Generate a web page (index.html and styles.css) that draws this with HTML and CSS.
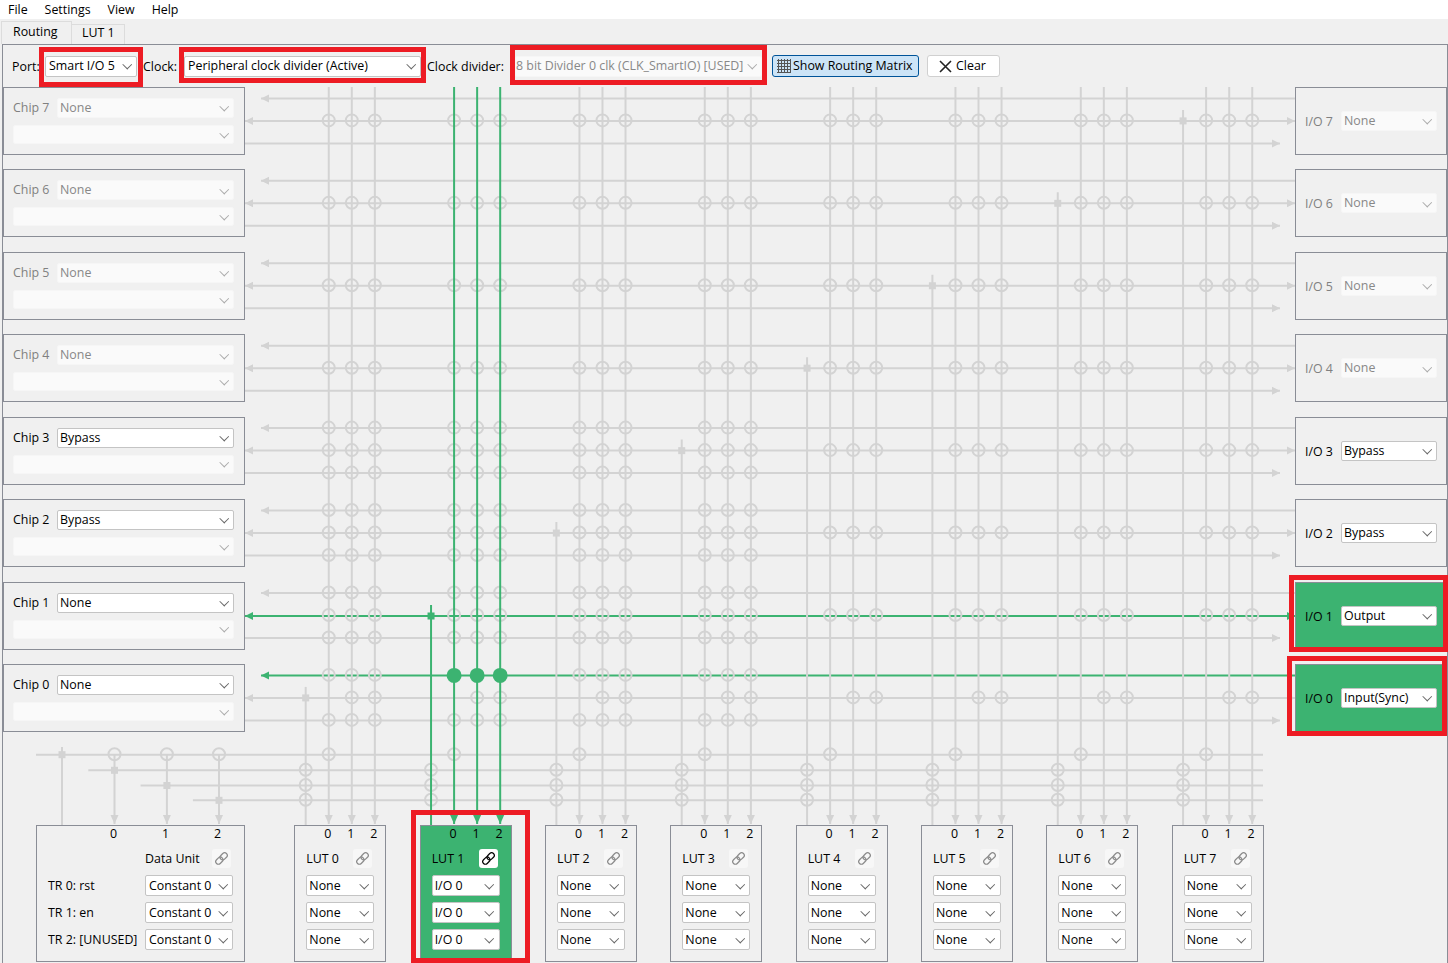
FILE: index.html
```html
<!DOCTYPE html>
<html lang="en">
<head>
    <meta charset="UTF-8">
    <meta name="viewport" content="width=device-width, initial-scale=1.0">
    <title>Smart I/O Configurator</title>
    <link rel="stylesheet" href="styles.css">
</head>
<body>
    <svg class="wires" id="wires" width="1448" height="963" viewBox="0 0 1448 963"></svg>

    <svg class="defs" width="0" height="0">
        <symbol id="link" viewBox="0 0 16 16">
            <g transform="rotate(-45 8 8)" fill="none" stroke="currentColor" stroke-width="1.3">
                <rect x="0.5" y="5.2" width="8.5" height="5.6" rx="2.8"/>
                <rect x="7" y="5.2" width="8.5" height="5.6" rx="2.8"/>
            </g>
        </symbol>
    </svg>

    <nav class="menu">
        <span>File</span>
        <span>Settings</span>
        <span>View</span>
        <span>Help</span>
    </nav>

    <div class="tabs">
        <div class="tab active">Routing</div>
        <div class="tab">LUT 1</div>
    </div>

    <div class="pane">
        <div class="toolbar">
            <label class="lbl-port">Port:</label>
            <div class="combo w-port"><span>Smart I/O 5</span></div>
            <label class="lbl-clock">Clock:</label>
            <div class="combo w-clock"><span>Peripheral clock divider (Active)</span></div>
            <label class="lbl-div">Clock divider:</label>
            <div class="combo off w-div"><span>8 bit Divider 0 clk (CLK_SmartIO) [USED]</span></div>
            <button class="btn btn-matrix">
                <svg width="14" height="14" viewBox="0 0 14 14" fill="none" stroke="#555" stroke-width="1">
                    <path d="M1.5 0V14M4.5 0V14M7.5 0V14M10.5 0V14M13.5 0V14M0 1.5H14M0 4.5H14M0 7.5H14M0 10.5H14M0 13.5H14"/>
                </svg>
                Show Routing Matrix
            </button>
            <button class="btn btn-clear">
                <svg width="13" height="13" viewBox="0 0 13 13" fill="none" stroke="#222" stroke-width="1.6">
                    <path d="M1 1L12 12M12 1L1 12"/>
                </svg>
                Clear
            </button>
        </div>

        <div class="board">
            <div class="column chips">
                <div class="box off">
                    <div class="row"><label>Chip 7</label><div class="combo off"><span>None</span></div></div>
                    <div class="combo off"><span></span></div>
                </div>
                <div class="box off">
                    <div class="row"><label>Chip 6</label><div class="combo off"><span>None</span></div></div>
                    <div class="combo off"><span></span></div>
                </div>
                <div class="box off">
                    <div class="row"><label>Chip 5</label><div class="combo off"><span>None</span></div></div>
                    <div class="combo off"><span></span></div>
                </div>
                <div class="box off">
                    <div class="row"><label>Chip 4</label><div class="combo off"><span>None</span></div></div>
                    <div class="combo off"><span></span></div>
                </div>
                <div class="box">
                    <div class="row"><label>Chip 3</label><div class="combo"><span>Bypass</span></div></div>
                    <div class="combo off"><span></span></div>
                </div>
                <div class="box">
                    <div class="row"><label>Chip 2</label><div class="combo"><span>Bypass</span></div></div>
                    <div class="combo off"><span></span></div>
                </div>
                <div class="box">
                    <div class="row"><label>Chip 1</label><div class="combo"><span>None</span></div></div>
                    <div class="combo off"><span></span></div>
                </div>
                <div class="box">
                    <div class="row"><label>Chip 0</label><div class="combo"><span>None</span></div></div>
                    <div class="combo off"><span></span></div>
                </div>
            </div>

            <div class="column ports">
                <div class="box off"><label>I/O 7</label><div class="combo off"><span>None</span></div></div>
                <div class="box off"><label>I/O 6</label><div class="combo off"><span>None</span></div></div>
                <div class="box off"><label>I/O 5</label><div class="combo off"><span>None</span></div></div>
                <div class="box off"><label>I/O 4</label><div class="combo off"><span>None</span></div></div>
                <div class="box"><label>I/O 3</label><div class="combo"><span>Bypass</span></div></div>
                <div class="box"><label>I/O 2</label><div class="combo"><span>Bypass</span></div></div>
                <div class="box used"><label>I/O 1</label><div class="combo"><span>Output</span></div></div>
                <div class="box used"><label>I/O 0</label><div class="combo"><span>Input(Sync)</span></div></div>
            </div>
        </div>

        <div class="cards">
            <div class="card data-unit">
                <div class="nums"><span>0</span><span>1</span><span>2</span></div>
                <div class="du-grid">
                    <div class="du-title"></div>
                    <div class="title"><label>Data Unit</label><div class="link"><svg width="15" height="15"><use href="#link"/></svg></div></div>
                    <label>TR 0: rst</label><div class="combo"><span>Constant 0</span></div>
                    <label>TR 1: en</label><div class="combo"><span>Constant 0</span></div>
                    <label>TR 2: [UNUSED]</label><div class="combo"><span>Constant 0</span></div>
                </div>
            </div>
            <div class="card lut">
                <div class="nums"><span>0</span><span>1</span><span>2</span></div>
                <div class="title"><label>LUT 0</label><div class="link"><svg width="15" height="15"><use href="#link"/></svg></div></div>
                <div class="combo"><span>None</span></div>
                <div class="combo"><span>None</span></div>
                <div class="combo"><span>None</span></div>
            </div>
            <div class="card lut used">
                <div class="nums"><span>0</span><span>1</span><span>2</span></div>
                <div class="title"><label>LUT 1</label><div class="link on"><svg width="15" height="15"><use href="#link"/></svg></div></div>
                <div class="combo"><span>I/O 0</span></div>
                <div class="combo"><span>I/O 0</span></div>
                <div class="combo"><span>I/O 0</span></div>
            </div>
            <div class="card lut">
                <div class="nums"><span>0</span><span>1</span><span>2</span></div>
                <div class="title"><label>LUT 2</label><div class="link"><svg width="15" height="15"><use href="#link"/></svg></div></div>
                <div class="combo"><span>None</span></div>
                <div class="combo"><span>None</span></div>
                <div class="combo"><span>None</span></div>
            </div>
            <div class="card lut">
                <div class="nums"><span>0</span><span>1</span><span>2</span></div>
                <div class="title"><label>LUT 3</label><div class="link"><svg width="15" height="15"><use href="#link"/></svg></div></div>
                <div class="combo"><span>None</span></div>
                <div class="combo"><span>None</span></div>
                <div class="combo"><span>None</span></div>
            </div>
            <div class="card lut">
                <div class="nums"><span>0</span><span>1</span><span>2</span></div>
                <div class="title"><label>LUT 4</label><div class="link"><svg width="15" height="15"><use href="#link"/></svg></div></div>
                <div class="combo"><span>None</span></div>
                <div class="combo"><span>None</span></div>
                <div class="combo"><span>None</span></div>
            </div>
            <div class="card lut">
                <div class="nums"><span>0</span><span>1</span><span>2</span></div>
                <div class="title"><label>LUT 5</label><div class="link"><svg width="15" height="15"><use href="#link"/></svg></div></div>
                <div class="combo"><span>None</span></div>
                <div class="combo"><span>None</span></div>
                <div class="combo"><span>None</span></div>
            </div>
            <div class="card lut">
                <div class="nums"><span>0</span><span>1</span><span>2</span></div>
                <div class="title"><label>LUT 6</label><div class="link"><svg width="15" height="15"><use href="#link"/></svg></div></div>
                <div class="combo"><span>None</span></div>
                <div class="combo"><span>None</span></div>
                <div class="combo"><span>None</span></div>
            </div>
            <div class="card lut">
                <div class="nums"><span>0</span><span>1</span><span>2</span></div>
                <div class="title"><label>LUT 7</label><div class="link"><svg width="15" height="15"><use href="#link"/></svg></div></div>
                <div class="combo"><span>None</span></div>
                <div class="combo"><span>None</span></div>
                <div class="combo"><span>None</span></div>
            </div>
        </div>
    </div>

    <!-- red annotation frames -->
    <div class="mark mark-port"></div>
    <div class="mark mark-clock"></div>
    <div class="mark mark-div"></div>
    <div class="mark mark-io1"></div>
    <div class="mark mark-io0"></div>
    <div class="mark mark-lut1"></div>

    <script src="diagram.js"></script>
</body>
</html>
```

FILE: styles.css
```css
* {
    box-sizing: border-box;
}
body {
    font-family: "Open Sans", "Noto Sans", sans-serif;
    font-size: 12.4px;
    line-height: 16px;
    color: #000;
    margin: 0;
    height: 963px;
    overflow: hidden;
    background-color: #f0f0f0;
}
label {
    white-space: nowrap;
}

/* diagram sits under the panels */
.wires {
    position: absolute;
    top: 0;
    left: 0;
    z-index: 0;
}
.defs {
    position: absolute;
}

.menu {
    display: flex;
    gap: 17px;
    height: 19px;
    padding: 0 8px;
    align-items: center;
    background-color: #fff;
    position: relative;
    z-index: 1;
}
.tabs {
    display: flex;
    align-items: flex-end;
    height: 25px;
    padding-left: 1px;
    position: relative;
    z-index: 1;
}
.tab {
    height: 20px;
    width: 53px;
    padding-left: 10px;
    line-height: 15px;
    border: 1px solid #dcdcdc;
    border-bottom: none;
    border-left: none;
}
.tab.active {
    height: 23px;
    width: 71px;
    padding-left: 11px;
    border-left: 1px solid #dcdcdc;
    line-height: 20px;
}

.pane {
    margin-left: 2px;
    width: 1446px;
    height: 919px;
    border: 1px solid #8a8d96;
    border-bottom: none;
    position: relative;
    z-index: 1;
}
.toolbar {
    display: flex;
    align-items: center;
    height: 42px;
    padding-left: 9px;
}
.toolbar label {
    padding-top: 1px;
}
.lbl-port {
    width: 33px;
}
.lbl-clock {
    width: 41px;
    margin-left: 6px;
}
.lbl-div {
    width: 88px;
    margin-left: 6px;
}
.w-port {
    width: 92px;
}
.w-clock {
    width: 237px;
}
.w-div {
    width: 247px;
}

.combo {
    display: flex;
    align-items: center;
    flex: none;
    height: 21px;
    padding-left: 3px;
    color: #000;
    background-color: #fff;
    border: 1px solid #c4c4c4;
    border-radius: 2px;
    white-space: nowrap;
    overflow: hidden;
}
.combo.w-div {
    padding-left: 0;
}
.combo span {
    flex: 1;
    min-width: 0;
}
.combo::after {
    content: "";
    flex: none;
    width: 5.5px;
    height: 5.5px;
    margin: 0 6px 3px 0;
    border-right: 1px solid #666;
    border-bottom: 1px solid #666;
    transform: rotate(45deg);
}
.combo.off {
    color: #888;
    background-color: #fafafa;
    border-color: #f6f6f6;
}
.combo.off::after {
    border-color: #aaa;
}

.btn {
    display: flex;
    align-items: center;
    height: 22px;
    margin: 0;
    padding: 0 4px;
    font: inherit;
    color: #000;
    border-radius: 3px;
    white-space: nowrap;
}
.btn-matrix {
    width: 147px;
    gap: 2px;
    margin-left: 10px;
    background-color: #cce4f7;
    border: 1px solid #005499;
}
.btn-clear {
    width: 73px;
    gap: 4px;
    margin-left: 8px;
    padding-left: 11px;
    background-color: #fff;
    border: 1px solid #d0d0d0;
}

.board {
    display: flex;
    justify-content: space-between;
    height: 645px;
}
.column {
    display: flex;
    flex-direction: column;
    gap: 14.43px;
}
.chips {
    width: 242px;
}
.ports {
    width: 152px;
}
.box {
    height: 68px;
    flex: none;
    border: 1px solid #8a8d96;
    background-color: #f0f0f0;
}
.box.off label {
    color: #808080;
}
.chips .box {
    display: flex;
    flex-direction: column;
    gap: 7px;
    padding: 10px 10px 0 9px;
}
.chips .box .combo {
    height: 20px;
}
.chips .box > .combo {
    height: 19px;
}
.row {
    display: flex;
    align-items: center;
}
.row label {
    width: 44px;
}
.row .combo {
    flex: 1;
    padding-left: 2px;
}
.ports .box {
    display: flex;
    align-items: center;
    padding-left: 9px;
}
.ports label {
    width: 36px;
    padding-top: 2px;
}
.ports .combo {
    width: 96px;
    height: 20px;
    padding-left: 2px;
}
.box.used,
.card.used {
    background-color: #3cb371;
}

.cards {
    display: flex;
    gap: 33.33px;
    margin-top: 93px;
    padding-left: 33px;
}
.card {
    height: 137px;
    flex: none;
    border: 1px solid #8a8d96;
    background-color: #f0f0f0;
}
.data-unit {
    width: 209px;
    margin-right: 16px;
    padding: 0 0.5px 0 11px;
}
.lut {
    width: 92px;
    display: flex;
    flex-direction: column;
    gap: 6px;
    padding-left: 11px;
}
.nums {
    display: flex;
    justify-content: flex-end;
    height: 16px;
    margin-bottom: 1px;
}
.lut .nums span {
    width: 23px;
    text-align: center;
}
.data-unit .nums span {
    width: 52px;
    text-align: center;
}
.title {
    display: flex;
    align-items: center;
    justify-content: space-between;
    height: 19px;
    margin-bottom: 1px;
}
.title label {
    padding-top: 1px;
}
.lut .title {
    width: 66px;
}
.lut .combo {
    width: 68px;
    padding-left: 2px;
}
.du-grid {
    display: grid;
    grid-template-columns: 97px 88px;
    row-gap: 6px;
    align-items: center;
    margin-top: 7px;
}
.du-grid .title {
    width: 86px;
}
.link {
    display: flex;
    align-items: center;
    justify-content: center;
    width: 19px;
    height: 19px;
    color: #8a8a8a;
    background-color: #f7f7f7;
    border-radius: 3px;
}
.link.on {
    color: #000;
    background-color: #fff;
}

.mark {
    position: absolute;
    z-index: 2;
    border: 5px solid #ed1c24;
}
.mark-port {
    left: 39px;
    top: 47px;
    width: 104px;
    height: 40px;
}
.mark-clock {
    left: 179px;
    top: 47px;
    width: 247px;
    height: 36px;
}
.mark-div {
    left: 510px;
    top: 45px;
    width: 257px;
    height: 40px;
}
.mark-io1 {
    left: 1289px;
    top: 575px;
    width: 159px;
    height: 77px;
}
.mark-io0 {
    left: 1287px;
    top: 656px;
    width: 160px;
    height: 80px;
}
.mark-lut1 {
    left: 411px;
    top: 810px;
    width: 119px;
    height: 153px;
}
```

FILE: diagram.js
```js
// Routing matrix drawn from the row and column positions
const GREY = '#d3d3d3';
const GREEN = '#3cb371';

const rowTop = (row) => 98.4 + 82.43 * (7 - row);
const rowMid = (row) => rowTop(row) + 22.5;
const rowLow = (row) => rowTop(row) + 45;
const lutOut = (lut) => 305.7 + 125.34 * lut;
const lutIn = (lut, col) => lutOut(lut) + 23.05 * (col + 1);

const BUS = [754.7, 770.3, 785.5, 800.3];
const BOTTOM = 825;

function line(x1, y1, x2, y2, color) {
    return `<line x1="${x1}" y1="${y1}" x2="${x2}" y2="${y2}" stroke="${color}" stroke-width="2"/>`;
}
function circle(x, y) {
    return `<circle cx="${x}" cy="${y - 0.5}" r="6" fill="none" stroke="${GREY}" stroke-width="2"/>`;
}
function square(x, y, color) {
    return `<rect x="${x - 3.5}" y="${y - 3.5}" width="7" height="7" fill="${color}"/>`;
}
function arrow(x, y, dir, color) {
    // x, y is the tip
    let pts;
    if (dir === 'left') pts = `${x},${y} ${x + 8},${y - 4} ${x + 8},${y + 4}`;
    if (dir === 'right') pts = `${x},${y} ${x - 8},${y - 4} ${x - 8},${y + 4}`;
    if (dir === 'down') pts = `${x},${y} ${x - 4},${y - 9} ${x + 4},${y - 9}`;
    return `<polygon points="${pts}" fill="${color}"/>`;
}

let under = '';
let verticals = '';
let circles = '';
let over = '';

// chip and I/O lines
for (let row = 7; row >= 0; row--) {
    const midColor = row === 1 ? GREEN : GREY;
    const topColor = row === 0 ? GREEN : GREY;
    // the active I/O 1 line sits on whole pixels
    const midY = row === 1 ? 616 : rowMid(row);
    under += line(261, rowTop(row), 1295, rowTop(row), topColor) + arrow(261, rowTop(row), 'left', topColor);
    under += line(245, midY, 1295, midY, midColor) + arrow(245, midY, 'left', midColor);
    under += arrow(1295, midY, 'right', midColor);
    under += line(245, rowLow(row), 1280, rowLow(row), GREY) + arrow(1280, rowLow(row), 'right', GREY);
}
BUS.forEach((y, i) => {
    under += line(36 + 52.3 * i, y, 1263, y, GREY);
});

// data unit
verticals += line(62, 747, 62, BOTTOM, GREY) + square(62, BUS[0], GREY);
[114.5, 166.9, 219].forEach((x, i) => {
    verticals += line(x, BUS[0], x, 824, GREY) + arrow(x, 824, 'down', GREY);
    verticals += square(x, BUS[i + 1], GREY);
    circles += circle(x, BUS[0]);
});

// LUT inputs and outputs
for (let lut = 0; lut < 8; lut++) {
    const out = lutOut(lut);
    const used = lut === 1;
    const outColor = used ? GREEN : GREY;
    const outY = used ? 616 : rowMid(lut);
    const outLine = line(out, outY - 11, out, BOTTOM, outColor) + square(out, outY, outColor);
    if (used) over += outLine; else verticals += outLine;
    BUS.slice(1).forEach((y) => {
        circles += circle(out, y);
    });

    for (let col = 0; col < 3; col++) {
        const x = lutIn(lut, col);
        const inLine = line(x, 87, x, 824, outColor) + arrow(x, 824, 'down', outColor);
        if (used) over += inLine; else verticals += inLine;
        if (col === 0) circles += circle(x, BUS[0]);

        for (let row = 7; row >= 0; row--) {
            if (!(row === 0 && col === 0)) circles += circle(x, rowMid(row));
            if (row <= 3 && lut <= 3) {
                if (used && row === 0) {
                    over += `<circle cx="${x}" cy="${rowTop(row)}" r="7.5" fill="${GREEN}"/>`;
                } else {
                    circles += circle(x, rowTop(row));
                }
                circles += circle(x, rowLow(row));
            }
        }
    }
}

document.getElementById('wires').innerHTML = under + verticals + circles + over;
```
